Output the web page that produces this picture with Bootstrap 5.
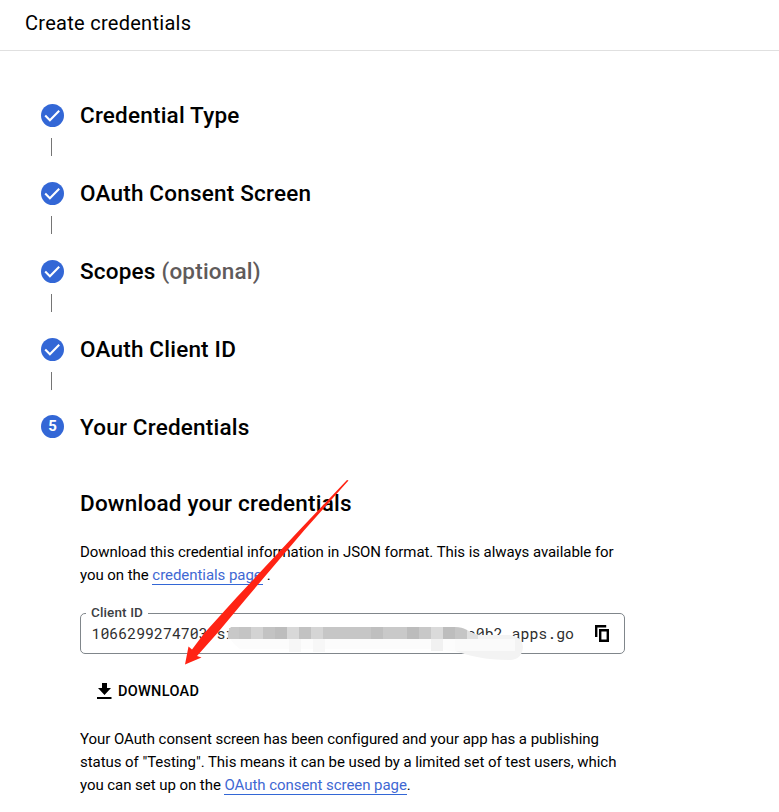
<!DOCTYPE html>
<html lang="en">
<head>
  <meta charset="UTF-8" />
  <meta name="viewport" content="width=device-width, initial-scale=1" />
  <title>Create credentials</title>
  <link href="https://cdn.jsdelivr.net/npm/bootstrap@5.3.0/dist/css/bootstrap.min.css" rel="stylesheet" />
  <style>
    body {
      font-family: Roboto, "Liberation Sans", sans-serif;
      font-size: 15px;
      line-height: 23px;
      color: #000;
      background-color: #fff;
      overflow: hidden;
    }
    .page-head {
      height: 51px;
      padding: 0 25px 5px;
      border-bottom: 1px solid #e0e0e0;
    }
    .page-head h1 {
      font-size: 20px;
      font-weight: 400;
      line-height: 24px;
      letter-spacing: .28px;
    }
    .steps {
      padding: 48px 0 0 41px;
    }
    .step {
      height: 78px;
    }
    .step-last {
      height: 77px;
    }
    .step-row {
      height: 32px;
      gap: 16px;
    }
    .step-row svg, .step-num {
      width: 23px;
      height: 23px;
      flex: none;
    }
    .step-num {
      margin-bottom: 2px;
      background-color: #3367d6;
      color: #fff;
      font-size: 15px;
      font-weight: 700;
    }
    .step h2, .result h3 {
      font-size: 22.5px;
      font-weight: 500;
      line-height: 30px;
      letter-spacing: .2px;
      white-space: nowrap;
    }
    .step h2 span {
      color: #5f5b5b;
    }
    .step-line {
      width: 1px;
      height: 18px;
      margin: 7px 0 0 10px;
      background-color: #757575;
    }
    .result {
      padding-left: 80px;
    }
    .result h3 {
      margin: 0 0 23px;
    }
    .result p {
      margin: 0;
      letter-spacing: -.055px;
      white-space: nowrap;
    }
    .result a {
      color: #3f68d3;
      text-decoration: none;
      border-bottom: 1px solid #3367d6;
    }
    .client-box {
      width: 545px;
      height: 41px;
      margin-top: 26px;
      padding: 0 15px 0 10.5px;
      border: 1px solid #80868b;
      border-radius: 5px;
    }
    .client-label {
      left: 5px;
      top: -12px;
      padding: 0 5px;
      background-color: #fff;
      color: #3c4043;
      font-size: 13.5px;
      font-weight: 500;
      line-height: 20px;
      letter-spacing: .12px;
    }
    .client-id {
      white-space: nowrap;
      font-family: "Roboto Mono", "Liberation Mono", monospace;
      font-size: 14.9px;
      color: #2e2e2e;
    }
    .download-btn {
      height: 24px;
      margin: 25px 0 0 17px;
      gap: 6px;
      padding: 1px 0 0;
      font-size: 14.5px;
      font-weight: 500;
      letter-spacing: .3px;
      color: #000;
    }
    .download-btn svg {
      margin-bottom: 2px;
    }
    .note {
      padding-top: 25px;
    }
    .redaction {
      left: 137px;
      top: 10px;
    }
    .pointer-arrow {
      left: 0;
      top: 0;
      pointer-events: none;
    }
  </style>
</head>
<body>
  <svg class="d-none">
    <symbol id="check" viewBox="0 0 23 23">
      <circle cx="11.5" cy="11.5" r="11.5" fill="#3367d6" />
      <path d="M4.2 11.6l4.7 4.7L18.2 6.8" fill="none" stroke="#fff" stroke-width="2.1" />
    </symbol>
  </svg>

  <header class="page-head d-flex align-items-center">
    <h1 class="m-0">Create credentials</h1>
  </header>

  <main>
    <div class="steps">
      <div class="step">
        <div class="step-row d-flex align-items-center">
          <svg><use href="#check" /></svg>
          <h2 class="m-0">Credential Type</h2>
        </div>
        <div class="step-line"></div>
      </div>
      <div class="step">
        <div class="step-row d-flex align-items-center">
          <svg><use href="#check" /></svg>
          <h2 class="m-0">OAuth Consent Screen</h2>
        </div>
        <div class="step-line"></div>
      </div>
      <div class="step">
        <div class="step-row d-flex align-items-center">
          <svg><use href="#check" /></svg>
          <h2 class="m-0">Scopes <span>(optional)</span></h2>
        </div>
        <div class="step-line"></div>
      </div>
      <div class="step">
        <div class="step-row d-flex align-items-center">
          <svg><use href="#check" /></svg>
          <h2 class="m-0">OAuth Client ID</h2>
        </div>
        <div class="step-line"></div>
      </div>
      <div class="step step-last">
        <div class="step-row d-flex align-items-center">
          <span class="step-num rounded-circle d-flex align-items-center justify-content-center">5</span>
          <h2 class="m-0">Your Credentials</h2>
        </div>
      </div>
    </div>

    <section class="result">
      <h3>Download your credentials</h3>
      <p>Download this credential information in JSON format. This is always available for<br />you on the <a href="#">credentials page&#8202;</a> .</p>

      <div class="client-box position-relative d-flex align-items-center justify-content-between">
        <span class="client-label position-absolute">Client ID</span>
        <span class="client-id">1066299274703-si<span class="invisible">00000000000000000000000000</span>a0b2.apps.go</span>
        <!-- mosaic over the middle of the id -->
        <svg class="redaction position-absolute" width="310" height="40" viewBox="218 624 310 40">
          <path d="M230 627H455V652L440 649H240Q226 640 230 627z" fill="#fcfcfc" />
          <path d="M455 627Q464 628 469 631Q474 634.5 481 635H509Q522 636 523 647Q522 659 511 660C485 660 470 656 455 651z" fill="#f3f3f3" />
          <path d="M455 639h60v12h-60z" fill="#fafafa" />
          <path d="M289 639h12v13h-12zM313 639h12v13h-12z" fill="#f7f7f7" />
          <path d="M231 627h8v12h-11q-1-9 3-12z" fill="#c8c8c8" />
          <path d="M239 627h12v12h-12z" fill="#c4c4c4" />
          <path d="M251 627h12v12h-12z" fill="#d3d3d3" />
          <path d="M263 627h12v12h-12z" fill="#c3c3c3" />
          <path d="M275 627h12v12h-12z" fill="#bdbdbd" />
          <path d="M287 627h12v12h-12z" fill="#d8d8d8" />
          <path d="M299 627h12v12h-12z" fill="#c2c2c2" />
          <path d="M311 627h12v12h-12z" fill="#d5d5d5" />
          <path d="M323 627h48v12h-48z" fill="#c6c6c6" />
          <path d="M371 627h12v12h-12z" fill="#bfbfbf" />
          <path d="M383 627h24v12h-24z" fill="#c9c9c9" />
          <path d="M407 627h12v12h-12z" fill="#bcbcbc" />
          <path d="M419 627h12v12h-12z" fill="#c8c8c8" />
          <path d="M431 627h12v12h-12z" fill="#dadada" />
          <path d="M431 639h12v12h-12z" fill="#f1f1f1" />
          <path d="M443 627h12v12h-12z" fill="#bdbdbd" />
          <path d="M455 627q7 0 12 3v9h-12z" fill="#c5c5c5" />
          <path d="M467 630q5 4 11 5v4h-11z" fill="#e0e0e0" />
        </svg>
        <svg width="14" height="17" viewBox="0 0 14 17" fill="none" stroke="#000" stroke-width="2.4">
          <path d="M1.2 12V1.2h10" />
          <path d="M5.2 5.2h7.600v10.600H5.200z" />
        </svg>
      </div>

      <button class="download-btn btn border-0 d-flex align-items-center">
        <svg width="15" height="16" viewBox="0 0 15 16">
          <path d="M5 0h5v5h4L7.500 12L1 5h4zM0 14h14.500v2H0z" />
        </svg>
        DOWNLOAD
      </button>

      <p class="note">Your OAuth consent screen has been configured and your app has a publishing<br />status of "Testing". This means it can be used by a limited set of test users, which<br />you can set up on the <a href="#">OAuth consent screen page</a>.</p>
    </section>
  </main>

  <svg class="pointer-arrow position-absolute" width="779" height="812" viewBox="0 0 779 812">
    <path d="M347 480L348.5 480.5L304 530.5L247.5 597L217 633.5L197 656L201.500 657.5L185 664.5L188.5 646.5L192 649.5L204 633.5L237 597L299.5 530z" fill="#ff2314" />
  </svg>
  <script src="https://cdn.jsdelivr.net/npm/bootstrap@5.3.0/dist/js/bootstrap.bundle.min.js"></script>
</body>
</html>
